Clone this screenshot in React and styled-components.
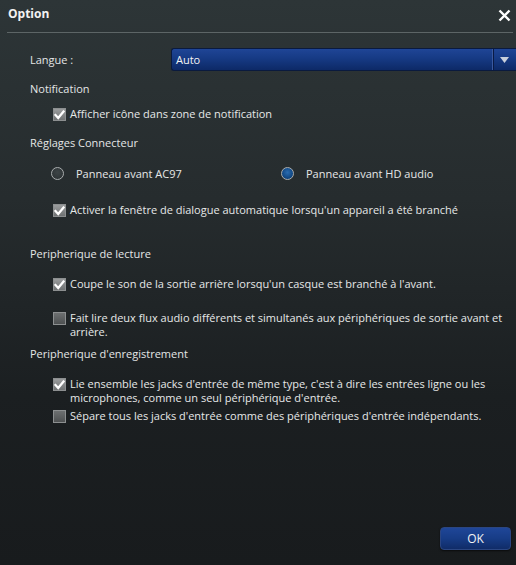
import React from "react";
import styled, { createGlobalStyle } from "styled-components";

const Global = createGlobalStyle`
  html, body {
    margin: 0;
    padding: 0;
    background: #1a1d1f;
  }
  * { box-sizing: border-box; }
`;

const Dialog = styled.div`
  width: 516px;
  height: 565px;
  display: flex;
  flex-direction: column;
  background: linear-gradient(180deg, #2d3537 0%, #262c2e 35%, #1b1f21 70%, #181b1d 100%);
  font-family: "Open Sans", "DejaVu Sans", sans-serif;
  font-size: 11px;
  color: #e4e6e6;
  overflow: hidden;
`;

const TitleBar = styled.div`
  height: 33px;
  margin: 0 3px 0 7px;
  display: flex;
  align-items: flex-start;
  justify-content: space-between;
  border-bottom: 1px solid #5d6566;
  padding-top: 6px;
`;

const Title = styled.div`
  font-weight: 700;
  font-size: 12px;
  color: #f2f2f2;
  line-height: 16px;
  padding-left: 1px;
`;

const Close = styled.button`
  border: none;
  background: none;
  padding: 0;
  width: 18px;
  height: 18px;
  display: flex;
  align-items: center;
  justify-content: center;
`;

const Body = styled.div`
  flex: 1;
  display: flex;
  flex-direction: column;
  padding-left: 30px;
`;

const LangRow = styled.div`
  margin-top: 15px;
  height: 23px;
  display: flex;
  align-items: center;
`;

const Label = styled.div`
  width: 141px;
  line-height: 14px;
`;

const Select = styled.div`
  flex: 1;
  height: 23px;
  display: flex;
  align-items: center;
  border-radius: 3px 0 0 3px;
  border: 1px solid #0a1a3e;
  border-right: none;
  background: linear-gradient(180deg, #1f4596 0%, #163a84 45%, #0d2967 100%);
  color: #f4f4f4;
`;

const SelectText = styled.div`
  flex: 1;
  padding-left: 4px;
  line-height: 14px;
`;

const SelectArrow = styled.div`
  width: 24px;
  height: 100%;
  display: flex;
  align-items: center;
  justify-content: center;
  border-left: 1px solid #3a5aa0;
  box-shadow: inset 1px 0 0 #0a1a44;
`;

const Heading = styled.div`
  margin-top: ${(p) => p.$top}px;
  line-height: 14px;
`;

const Option = styled.div`
  margin-top: ${(p) => p.$top}px;
  margin-left: ${(p) => p.$indent}px;
  display: flex;
  align-items: flex-start;
  line-height: 14px;
`;

const RadioRow = styled.div`
  margin-top: ${(p) => p.$top}px;
  margin-left: 21px;
  display: flex;
  height: 14px;
  align-items: center;
`;

const RadioItem = styled.div`
  width: ${(p) => p.$width}px;
  display: flex;
  align-items: center;
  gap: 12px;
`;

const Box = styled.span`
  flex: none;
  width: 13px;
  height: 13px;
  margin-top: 1px;
  margin-right: 4px;
  border: 1px solid #8c8f90;
  background: ${(p) =>
    p.$checked
      ? "linear-gradient(180deg, #9a9c9d 0%, #6f7273 100%)"
      : "linear-gradient(180deg, #6d7071 0%, #4e5152 100%)"};
  display: flex;
  align-items: center;
  justify-content: center;
`;

const Radio = styled.span`
  flex: none;
  width: 13px;
  height: 13px;
  border-radius: 50%;
  border: 1.5px solid #a9adae;
  background: ${(p) =>
    p.$on
      ? "radial-gradient(circle at 50% 40%, #2a6cb0 0%, #134a86 60%, #0c3563 100%)"
      : "radial-gradient(circle at 50% 40%, #3d4446 0%, #2a3032 100%)"};
`;

const Text = styled.span`
  color: #e6e8e8;
`;

const Footer = styled.div`
  margin-top: auto;
  padding: 0 5px 15px 0;
  display: flex;
  justify-content: flex-end;
`;

const OkButton = styled.button`
  width: 71px;
  height: 23px;
  border-radius: 4px;
  border: 1px solid #2b4682;
  background: linear-gradient(180deg, #1f4698 0%, #173c86 50%, #102c68 100%);
  color: #f2f2f2;
  font-family: "Open Sans", "DejaVu Sans", sans-serif;
  font-size: 12px;
  padding: 0;
  box-shadow: 0 1px 2px rgba(0, 0, 0, 0.6);
`;

const Check = ({ checked }) => (
  <Box $checked={checked}>
    {checked && (
      <svg width="11" height="10" viewBox="0 0 11 10">
        <path d="M1.5 5 L4.2 8 L9.5 1.5" fill="none" stroke="#ffffff" strokeWidth="2.2" strokeLinecap="square" />
      </svg>
    )}
  </Box>
);

const CheckOption = ({ top, checked, children }) => (
  <Option $top={top} $indent={23}>
    <Check checked={checked} />
    <Text>{children}</Text>
  </Option>
);

export default function App() {
  return (
    <>
      <Global />
      <Dialog>
        <TitleBar>
          <Title>Option</Title>
          <Close>
            <svg width="13" height="13" viewBox="0 0 13 13">
              <path d="M1.5 1.5 L11.5 11.5 M11.5 1.5 L1.5 11.5" stroke="#ffffff" strokeWidth="2.4" />
            </svg>
          </Close>
        </TitleBar>
        <Body>
          <LangRow>
            <Label>Langue :</Label>
            <Select>
              <SelectText>Auto</SelectText>
              <SelectArrow>
                <svg width="9" height="6" viewBox="0 0 9 6">
                  <path d="M0 0 H9 L4.5 6 Z" fill="#c9d0dc" />
                </svg>
              </SelectArrow>
            </Select>
          </LangRow>

          <Heading $top={11}>Notification</Heading>
          <CheckOption top={11} checked>Afficher icône dans zone de notification</CheckOption>

          <Heading $top={15}>Réglages Connecteur</Heading>
          <RadioRow $top={16}>
            <RadioItem $width={230}>
              <Radio />
              <Text>Panneau avant AC97</Text>
            </RadioItem>
            <RadioItem>
              <Radio $on />
              <Text>Panneau avant HD audio</Text>
            </RadioItem>
          </RadioRow>
          <CheckOption top={23} checked>
            Activer la fenêtre de dialogue automatique lorsqu'un appareil a été branché
          </CheckOption>

          <Heading $top={30}>Peripherique de lecture</Heading>
          <CheckOption top={16} checked>
            Coupe le son de la sortie arrière lorsqu'un casque est branché à l'avant.
          </CheckOption>
          <CheckOption top={20}>
            Fait lire deux flux audio différents et simultanés aux périphériques de sortie avant et arrière.
          </CheckOption>

          <Heading $top={8}>Peripherique d'enregistrement</Heading>
          <CheckOption top={16} checked>
            Lie ensemble les jacks d'entrée de même type, c'est à dire les entrées ligne ou les microphones, comme un seul périphérique d'entrée.
          </CheckOption>
          <CheckOption top={4}>
            Sépare tous les jacks d'entrée comme des périphériques d'entrée indépendants.
          </CheckOption>
        </Body>
        <Footer>
          <OkButton>OK</OkButton>
        </Footer>
      </Dialog>
    </>
  );
}
